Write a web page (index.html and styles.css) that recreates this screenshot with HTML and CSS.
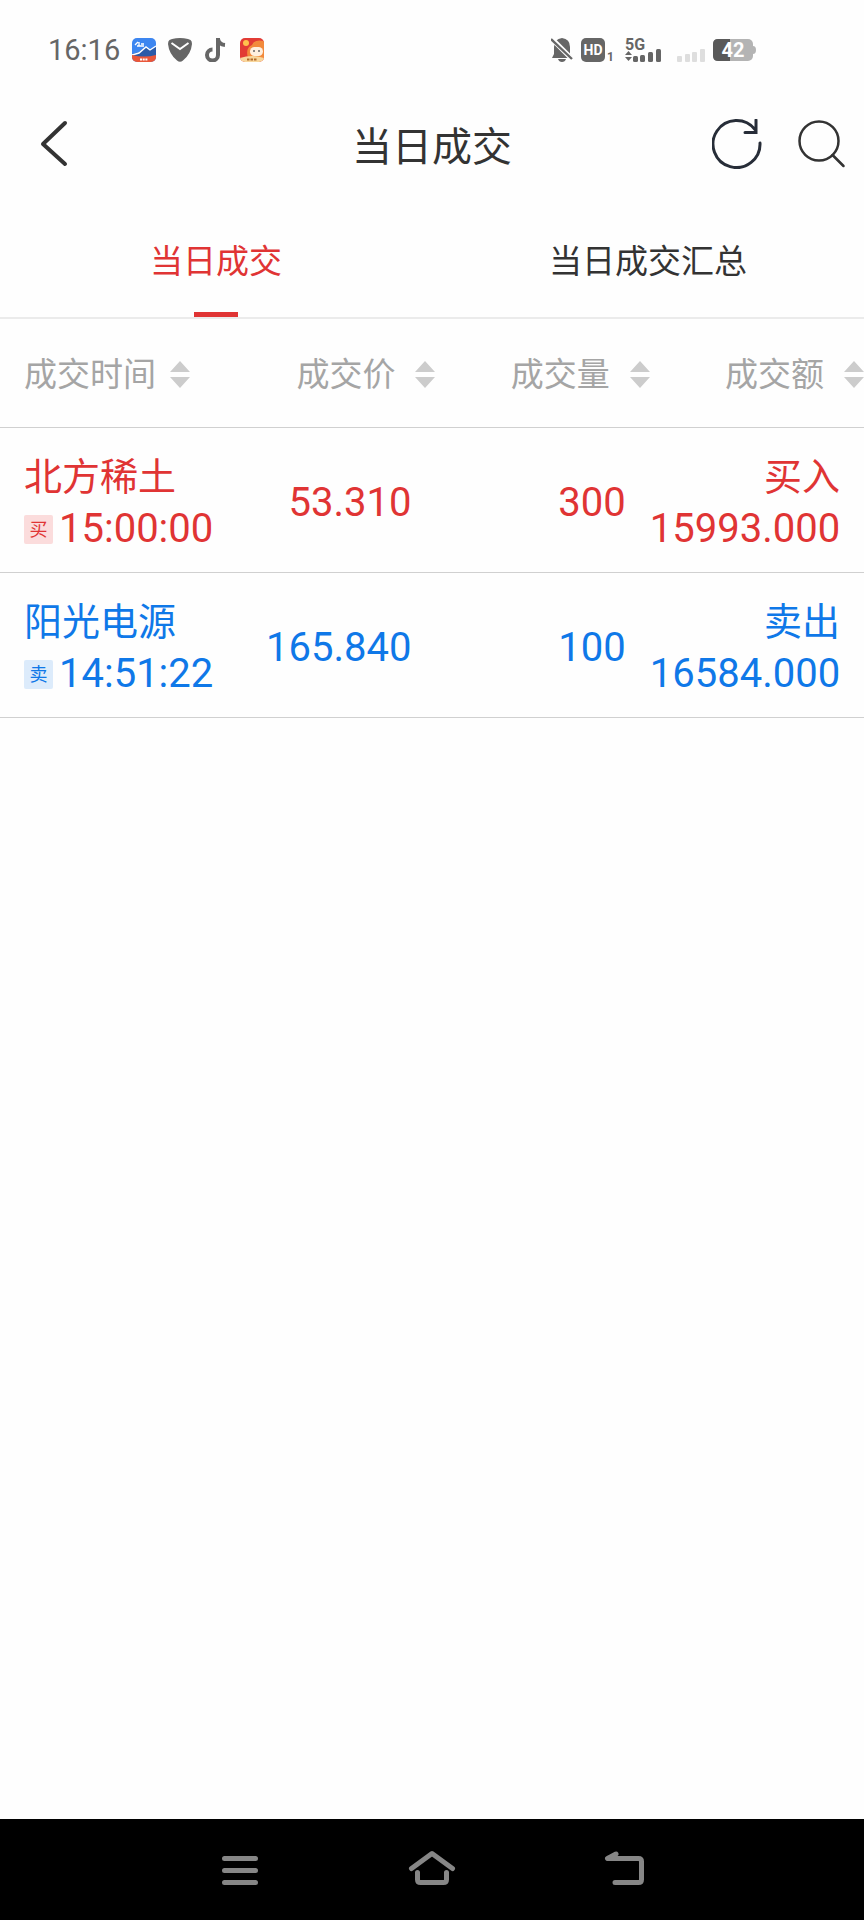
FILE: index.html
```html
<!DOCTYPE html>
<html lang="zh-CN">
<head>
<meta charset="utf-8">
<meta name="viewport" content="width=device-width, initial-scale=1">
<title>当日成交</title>
<link rel="stylesheet" href="styles.css">
</head>
<body>
<div class="status">
  <div class="status-left">
    <span class="clock">16:16</span>
    <svg width="24" height="24" viewBox="0 0 24 24" aria-hidden="true">
      <defs><clipPath id="app1"><rect width="24" height="24" rx="5"/></clipPath></defs>
      <g clip-path="url(#app1)">
        <rect width="24" height="24" fill="#3d86f0"/>
        <path d="M0 16l7-2 6-5 5 3 6-3v10H0z" fill="#2a5aa8"/>
        <path d="M0 17l7-2 7-6 4 3 6-4" fill="none" stroke="#fff" stroke-width="1.4"/>
        <path d="M3 7l3-3M5 8h7M7 4v4M9 6h3" stroke="#fff" stroke-width="1.3"/>
        <path d="M0 17q12 3 24 0v7H0z" fill="#e9573a"/>
        <path d="M8 21.500h8" stroke="#fff" stroke-width="2" stroke-dasharray="2 .7"/>
      </g>
    </svg>
    <svg width="24" height="24" viewBox="0 0 24 24" aria-hidden="true">
      <path d="M4 1Q12-1 20 1l2.500 1Q24 3 24 6q-1 10-9 16.500-3 2.500-6 0Q1 16 0 6q0-3 1.500-4z" fill="#666"/>
      <path d="M3.500 5l8.500 6L20.500 5" fill="none" stroke="#fff" stroke-width="2"/>
    </svg>
    <svg width="24" height="24" viewBox="0 0 24 24" aria-hidden="true">
      <path d="M14 0v17a5.500 5.500 0 1 1-5.500-5.500M14 1q1 5.500 7 6" fill="none" stroke="#666" stroke-width="4"/>
    </svg>
    <svg width="24" height="24" viewBox="0 0 24 24" aria-hidden="true">
      <defs><clipPath id="app2"><rect width="24" height="24" rx="5"/></clipPath></defs>
      <g clip-path="url(#app2)">
        <rect width="24" height="24" fill="#e23b35"/>
        <path d="M8 20Q5 10 12 7q2-6 12-4v19z" fill="#f28a3c"/>
        <circle cx="6" cy="5" r="3" fill="#ffc24d"/>
        <rect x="10" y="9" width="13" height="9" rx="4.500" fill="#fff0df"/>
        <path d="M14 12v2M19 12v2" stroke="#666" stroke-width="1.500"/>
        <path d="M0 20q12-4 24 0v4H0z" fill="#f8d79c"/>
        <path d="M7 21.500h10" stroke="#b36a2a" stroke-width="2" stroke-dasharray="2.500 1"/>
      </g>
    </svg>
  </div>
  <div class="status-right">
    <svg width="22" height="24" viewBox="0 0 22 24" aria-hidden="true">
      <path d="M11 0q8 1 8 9v7l3 4H1l2-4V9q0-8 8-9zM7 21h8q-1 3-4 3t-4-3z" fill="#666"/>
      <path d="M0 0l22 22" stroke="#fff" stroke-width="5"/>
      <path d="M0 1l21 20" stroke="#666" stroke-width="2.400"/>
    </svg>
    <svg width="36" height="32" viewBox="0 -4 36 32" aria-hidden="true">
      <rect width="24" height="24" rx="5" fill="#666"/>
      <text x="12" y="17" text-anchor="middle" class="hd">HD</text>
      <text x="26" y="23" class="sim">1</text>
    </svg>
    <svg width="36" height="36" viewBox="0 -6 36 36" aria-hidden="true">
      <text x="0" y="12" class="net">5G</text>
      <path d="M0 17l3.500-4L7 17zM0 19l3.500 4L7 19z" fill="#666"/>
      <g fill="#666"><rect x="8" y="18" width="5" height="6" rx="1.500"/><rect x="15" y="17" width="5" height="7" rx="1.500"/><rect x="23" y="14" width="5" height="10" rx="1.500"/><rect x="31" y="11" width="5" height="13" rx="1.500"/></g>
    </svg>
    <svg class="signal-off" width="28" height="24" viewBox="0 0 28 24" aria-hidden="true">
      <g fill="#dedede"><rect y="18" width="5" height="6" rx="1"/><rect x="8" y="16" width="5" height="8" rx="1"/><rect x="15" y="14" width="5" height="10" rx="1"/><rect x="23" y="11" width="5" height="13" rx="1"/></g>
    </svg>
    <svg width="43" height="22" viewBox="0 0 43 22" aria-hidden="true">
      <rect width="40" height="22" rx="5" fill="#b4b4b4"/>
      <path d="M5 0h12v22H5q-5 0-5-5V5q0-5 5-5z" fill="#595959"/>
      <path d="M40 7q3 0 3 4t-3 4z" fill="#b4b4b4"/>
      <text x="20" y="18" text-anchor="middle" class="battery">42</text>
    </svg>
  </div>
</div>

<header class="header">
  <button class="icon-btn back" type="button" aria-label="返回">
    <svg width="28" height="48" viewBox="0 0 28 48"><path d="M25 3L3 24l22 20" fill="none" stroke="#333" stroke-width="4" stroke-linecap="round" stroke-linejoin="round"/></svg>
  </button>
  <h1 class="title">当日成交</h1>
  <div class="actions">
    <button class="icon-btn" type="button" aria-label="刷新">
      <svg width="50" height="50" viewBox="0 0 50 50" fill="none" stroke="#272d38" stroke-width="3" stroke-linecap="round"><path d="M48 24A23.500 23.500 0 1 1 43 10.500M44 1v12.500H33"/></svg>
    </button>
    <button class="icon-btn" type="button" aria-label="搜索">
      <svg width="48" height="48" viewBox="0 0 48 48" fill="none" stroke="#333" stroke-width="2.500" stroke-linecap="round"><circle cx="21" cy="21" r="19.500"/><path d="M34.500 35L45.500 46"/></svg>
    </button>
  </div>
</header>

<nav class="tabs">
  <a class="tab tab-active" href="#today" aria-current="page">当日成交</a>
  <a class="tab" href="#summary">当日成交汇总</a>
</nav>

<main class="content">
  <table class="trades">
    <thead>
      <tr>
        <th class="col-time"><button class="sort sort-first" type="button">成交时间<svg width="20" height="28" viewBox="0 0 20 28"><path d="M0 11L10 0l10 11zM0 16h20L10 27z"/></svg></button></th>
        <th><button class="sort" type="button">成交价<svg width="20" height="28" viewBox="0 0 20 28"><path d="M0 11L10 0l10 11zM0 16h20L10 27z"/></svg></button></th>
        <th><button class="sort" type="button">成交量<svg width="20" height="28" viewBox="0 0 20 28"><path d="M0 11L10 0l10 11zM0 16h20L10 27z"/></svg></button></th>
        <th><button class="sort" type="button">成交额<svg width="20" height="28" viewBox="0 0 20 28"><path d="M0 11L10 0l10 11zM0 16h20L10 27z"/></svg></button></th>
      </tr>
    </thead>
    <tbody>
      <tr class="buy">
        <td class="col-time"><div class="name">北方稀土</div><div class="time"><span class="tag">买</span>15:00:00</div></td>
        <td>53.310</td>
        <td>300</td>
        <td><div class="side">买入</div><div class="amount">15993.000</div></td>
      </tr>
      <tr class="sell">
        <td class="col-time"><div class="name">阳光电源</div><div class="time"><span class="tag">卖</span>14:51:22</div></td>
        <td>165.840</td>
        <td>100</td>
        <td><div class="side">卖出</div><div class="amount">16584.000</div></td>
      </tr>
    </tbody>
  </table>
</main>

<div class="system-nav">
  <button class="icon-btn" type="button" aria-label="最近任务">
    <svg width="48" height="42" viewBox="0 0 48 42"><path d="M8.500 9.500h31M8.500 21.500h31M8.500 33.500h31"/></svg>
  </button>
  <button class="icon-btn" type="button" aria-label="主页">
    <svg width="48" height="42" viewBox="0 0 48 42"><path d="M3.500 19.500L24 4.500l20.500 15M9.500 23.500v7q0 3 3 3h23q3 0 3-3v-7"/></svg>
  </button>
  <button class="icon-btn" type="button" aria-label="返回上一级">
    <svg width="48" height="42" viewBox="0 0 48 42"><path d="M16 5L7.500 9.500h31q3 0 3 3v18q0 3-3 3H15"/></svg>
  </button>
</div>
</body>
</html>
```
FILE: styles.css
```css
* {
  box-sizing: border-box;
}

body {
  margin: 0;
  min-height: 100vh;
  display: flex;
  flex-direction: column;
  background: #fefefe;
  color: #333;
  font-family: Roboto, "Noto Sans CJK SC", sans-serif;
}

button {
  padding: 0;
  border: 0;
  background: none;
  font: inherit;
  color: inherit;
}

svg {
  display: block;
  flex: none;
}

.status {
  display: flex;
  justify-content: space-between;
  align-items: center;
  height: 98px;
  padding: 2px 108px 0 48px;
}

.status-left,
.status-right {
  display: flex;
  align-items: center;
}

.status-left {
  gap: 12px;
}

.status-right {
  gap: 8px;
}

.signal-off {
  margin-left: 8px;
}

.clock {
  font-size: 29px;
  color: #666;
}

.hd,
.sim,
.net,
.battery {
  font-family: Roboto, sans-serif;
  font-weight: 700;
}

.hd {
  font-size: 14px;
  fill: #fff;
}

.sim {
  font-size: 12px;
  fill: #666;
}

.net {
  font-size: 16px;
  fill: #666;
}

.battery {
  font-size: 20px;
  fill: #fff;
}

.header {
  display: grid;
  grid-template-columns: 1fr auto 1fr;
  align-items: center;
  height: 92px;
  padding: 0 18px;
}

.icon-btn {
  display: flex;
  justify-content: center;
  align-items: center;
}

.back {
  justify-self: start;
  margin-left: 22px;
}

.title {
  margin: 0;
  padding-top: 8px;
  font-size: 40px;
  line-height: 48px;
  font-weight: 400;
}

.actions {
  display: flex;
  justify-content: flex-end;
  align-items: center;
  gap: 36px;
}

.tabs {
  display: flex;
  height: 129px;
  border-bottom: 2px solid #ebebeb;
}

.tab {
  flex: 1;
  display: flex;
  flex-direction: column;
  align-items: center;
  justify-content: space-between;
  padding-top: 52px;
  font-size: 33px;
  line-height: 40px;
  color: #333;
  text-decoration: none;
}

.tab-active {
  color: #e03434;
}

.tab-active::after {
  content: "";
  width: 44px;
  height: 5px;
  background: #e03434;
}

.content {
  flex: 1;
}

.trades {
  width: 100%;
  table-layout: fixed;
  border-collapse: separate;
  border-spacing: 0;
}

.trades th {
  width: 24.8%;
  height: 109px;
  padding: 4px 0 0;
  border-bottom: 1px solid #d0d0d0;
  font-size: 33px;
  line-height: 40px;
  font-weight: 400;
  color: #a5a5a5;
}

.trades td {
  height: 145px;
  padding: 6px 24px 0 0;
  border-bottom: 1px solid #d0d0d0;
  font-size: 40px;
  line-height: 52px;
  text-align: right;
  white-space: nowrap;
}

.trades .col-time {
  width: auto;
  padding-left: 24px;
  padding-right: 0;
  text-align: left;
}

.sort {
  display: flex;
  align-items: center;
  gap: 20px;
  margin-left: auto;
}

.sort-first {
  gap: 14px;
  margin-left: 0;
}

.sort svg {
  fill: #ccc;
}

.name,
.side {
  font-size: 38px;
}

.time {
  display: flex;
  align-items: center;
  gap: 6px;
}

.tag {
  flex: none;
  width: 29px;
  height: 29px;
  border-radius: 2px;
  font-size: 18px;
  line-height: 29px;
  text-align: center;
}

.buy {
  color: #e03434;
}

.buy .tag {
  background: #fbdcdc;
}

.sell {
  color: #0f78e8;
}

.sell .tag {
  background: #dcebfb;
}

.system-nav {
  display: flex;
  justify-content: center;
  align-items: center;
  gap: 144px;
  height: 101px;
  background: #000;
}

.system-nav svg {
  fill: none;
  stroke: #868686;
  stroke-width: 5;
  stroke-linecap: round;
  stroke-linejoin: round;
}
```
